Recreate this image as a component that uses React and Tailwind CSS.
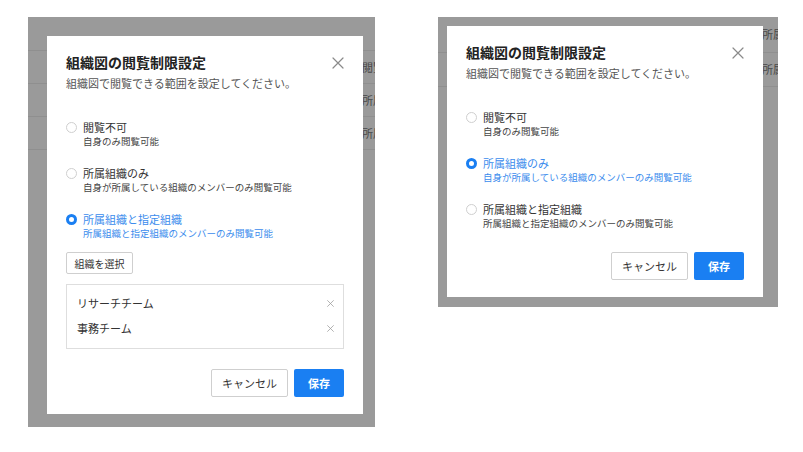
import React from 'react';

const options = [
  { label: '閲覧不可', desc: '自身のみ閲覧可能' },
  { label: '所属組織のみ', desc: '自身が所属している組織のメンバーのみ閲覧可能' },
  { label: '所属組織と指定組織', desc: '所属組織と指定組織のメンバーのみ閲覧可能' },
];

function CloseIcon({ size = 12, color = '#8a8a8a', width = 1.2 }) {
  return (
    <svg width={size} height={size} viewBox="0 0 12 12" fill="none">
      <path d="M1 1L11 11M11 1L1 11" stroke={color} strokeWidth={width} strokeLinecap="round" />
    </svg>
  );
}

function Radio({ checked }) {
  return checked ? (
    <span className="w-[11px] h-[11px] shrink-0 rounded-full border-[3px] border-[#1a7ff2] bg-white" />
  ) : (
    <span className="w-[11px] h-[11px] shrink-0 rounded-full border border-[#cfcfcf] bg-white" />
  );
}

function Dialog({ selected, orgs }) {
  return (
    <div className="relative w-[316px] bg-white pt-[19px] pb-[17px] px-[19px]">
      <button className="absolute top-[21px] right-[19px]">
        <CloseIcon />
      </button>

      <h2 className="text-[14px] leading-[15px] font-bold text-[#222]">組織図の閲覧制限設定</h2>
      <p className="mt-[5px] text-[11px] leading-[16px] text-[#555]">組織図で閲覧できる範囲を設定してください。</p>

      <div className="mt-[29px] flex flex-col gap-[18px]">
        {options.map((o, i) => {
          const on = i === selected;
          return (
            <div key={o.label}>
              <div className="flex items-center h-[14px]">
                <Radio checked={on} />
                <span className={`ml-[6px] text-[11px] leading-[14px] ${on ? 'text-[#3b8ced]' : 'text-[#333]'}`}>
                  {o.label}
                </span>
              </div>
              <p className={`pl-[17px] text-[9.5px] leading-[14px] ${on ? 'text-[#3b8ced]' : 'text-[#444]'}`}>
                {o.desc}
              </p>
            </div>
          );
        })}
      </div>

      {orgs && (
        <>
          <button className="mt-[12px] h-[22px] w-[67px] border border-[#cfcfcf] rounded-[2px] text-[10px] text-[#333] flex items-center justify-center">
            組織を選択
          </button>
          <div className="mt-[10px] h-[65px] border border-[#dedede] pt-[10px] pl-[10px] pr-[9px] flex flex-col gap-[9px]">
            {orgs.map((name) => (
              <div key={name} className="flex items-center justify-between h-[16px]">
                <span className="text-[11px] leading-[16px] text-[#333]">{name}</span>
                <CloseIcon size={7} color="#9a9a9a" width={1.3} />
              </div>
            ))}
          </div>
        </>
      )}

      <div className={`${orgs ? 'mt-[20px]' : 'mt-[22px]'} flex justify-end gap-[6px]`}>
        <button className="h-[28px] w-[77px] border border-[#cfcfcf] rounded-[2px] bg-white text-[11px] text-[#333]">
          キャンセル
        </button>
        <button className="h-[28px] w-[50px] rounded-[2px] bg-[#1a7ff2] text-[11px] font-bold text-white">
          保存
        </button>
      </div>
    </div>
  );
}

function Backdrop({ rows, textLeft, className, children, dialogPos }) {
  return (
    <div className={`relative overflow-hidden bg-[#9a9a9a] ${className}`}>
      <div className="flex flex-col">
        {rows.map((r, i) => (
          <div
            key={i}
            className="border-b border-[#8f8f8f] flex items-center whitespace-nowrap text-[11px] text-[#474747]"
            style={{ height: r.h, paddingLeft: textLeft }}
          >
            {r.text}
          </div>
        ))}
      </div>
      <div className={`absolute ${dialogPos}`}>{children}</div>
    </div>
  );
}

export default function App() {
  return (
    <div className="w-[803px] h-[452px] bg-white pt-[17px] flex items-start font-['Noto_Sans_CJK_JP','Liberation_Sans',sans-serif]">
      <Backdrop
        className="ml-[28px] w-[347px] h-[410px]"
        textLeft={334}
        dialogPos="top-[19px] left-[19px]"
        rows={[
          { h: 34, text: '' },
          { h: 33, text: '閲覧不可' },
          { h: 33, text: '所属組織のみ' },
          { h: 33, text: '所属組織と指定組織' },
        ]}
      >
        <Dialog selected={2} orgs={['リサーチチーム', '事務チーム']} />
      </Backdrop>

      <Backdrop
        className="ml-[63px] w-[340px] h-[290px]"
        textLeft={324}
        dialogPos="top-[9px] left-[9px]"
        rows={[
          { h: 36, text: '所属組織のみ' },
          { h: 34, text: '所属組織のみ' },
        ]}
      >
        <Dialog selected={1} />
      </Backdrop>
    </div>
  );
}
